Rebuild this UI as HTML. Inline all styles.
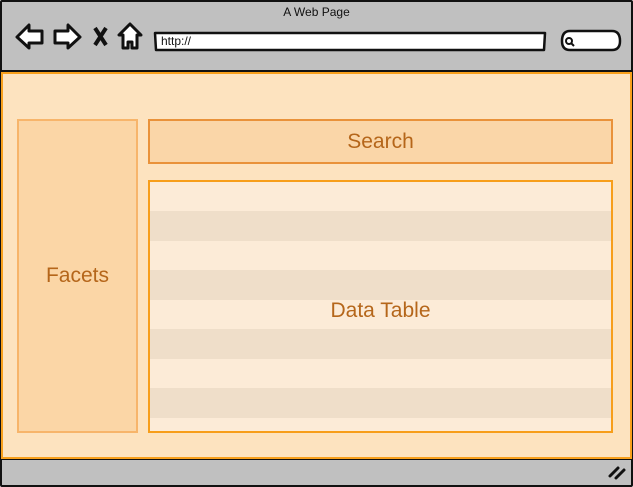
<!DOCTYPE html>
<html><head><meta charset="utf-8"><style>
*{margin:0;padding:0;box-sizing:border-box}
body{width:633px;height:487px;background:#fff;position:relative;overflow:hidden;font-family:"Liberation Sans",sans-serif}
.abs{position:absolute}
</style></head><body>
<div class="abs" style="left:0;top:0;width:633px;height:487px;background:#c0c0c0;border:2px solid #111;border-radius:2px"></div>
<div class="abs" style="left:0;top:70px;width:633px;height:2px;background:#111"></div>
<div class="abs" style="left:0;top:458px;width:633px;height:2px;background:#111"></div>
<div class="abs" style="left:0;top:5px;width:633px;text-align:center;font-size:12px;color:#111">A Web Page</div>
<svg class="abs" style="left:0;top:0" width="633" height="72">
<g fill="#fff" stroke="#111" stroke-width="3" stroke-linejoin="round">
<path d="M17 37 L29 25 L29 31 L42 31 L42 43 L29 43 L29 48 Z"/>
<path d="M80 37 L68 25 L68 31 L55 31 L55 43 L68 43 L68 48 Z"/>
<path d="M130 24 L119 35 L123 35 L123 48 L128 48 L128 42 L132 42 L132 48 L137 48 L137 35 L141 35 Z"/>
</g>
<g fill="#fff" stroke="#111" stroke-width="2.5" stroke-linejoin="round">
<path d="M155 33 L545 33 L544 50 L156 50 Z"/>
<path d="M570 31 L612 31 Q620 31 620 41 Q620 50 612 50 L570 50 Q562 50 562 41 Q562 31 570 31 Z"/>
</g>
<path d="M95 28 L106 45 M106 28 L95 45" stroke="#111" stroke-width="4"/>
<circle cx="569" cy="41" r="3" fill="none" stroke="#111" stroke-width="2"/>
<path d="M571 43 L574 46" stroke="#111" stroke-width="2"/>
<text x="161" y="45" font-family="Liberation Sans" font-size="12" fill="#111">http://</text>
</svg>
<div class="abs" style="left:1px;top:72px;width:631px;height:387px;background:#fde3bf;border:2px solid #f8a01c"></div>
<div class="abs" style="left:17px;top:119px;width:121px;height:314px;background:#fbd6a6;border:2px solid #f7b56b;display:flex;align-items:center;justify-content:center;font-size:21px;color:#b5661a">Facets</div>
<div class="abs" style="left:148px;top:119px;width:465px;height:45px;background:#fad6a8;border:2px solid #e9923a;display:flex;align-items:center;justify-content:center;font-size:21px;color:#b5661a">Search</div>
<div class="abs" style="left:148px;top:180px;width:465px;height:253px;border:2px solid #f79e1a;background:repeating-linear-gradient(#fcebd7 0 29px,#efdec9 29px 59px);background-position:0 0"></div>
<div class="abs" style="left:148px;top:184px;width:465px;height:253px;display:flex;align-items:center;justify-content:center;font-size:21px;color:#b5661a">Data Table</div>
<svg class="abs" style="left:605px;top:462px" width="25" height="20"><path d="M5 14 L13 6 M11 16 L19 8" stroke="#111" stroke-width="3" stroke-linecap="round"/></svg>
</body></html>
